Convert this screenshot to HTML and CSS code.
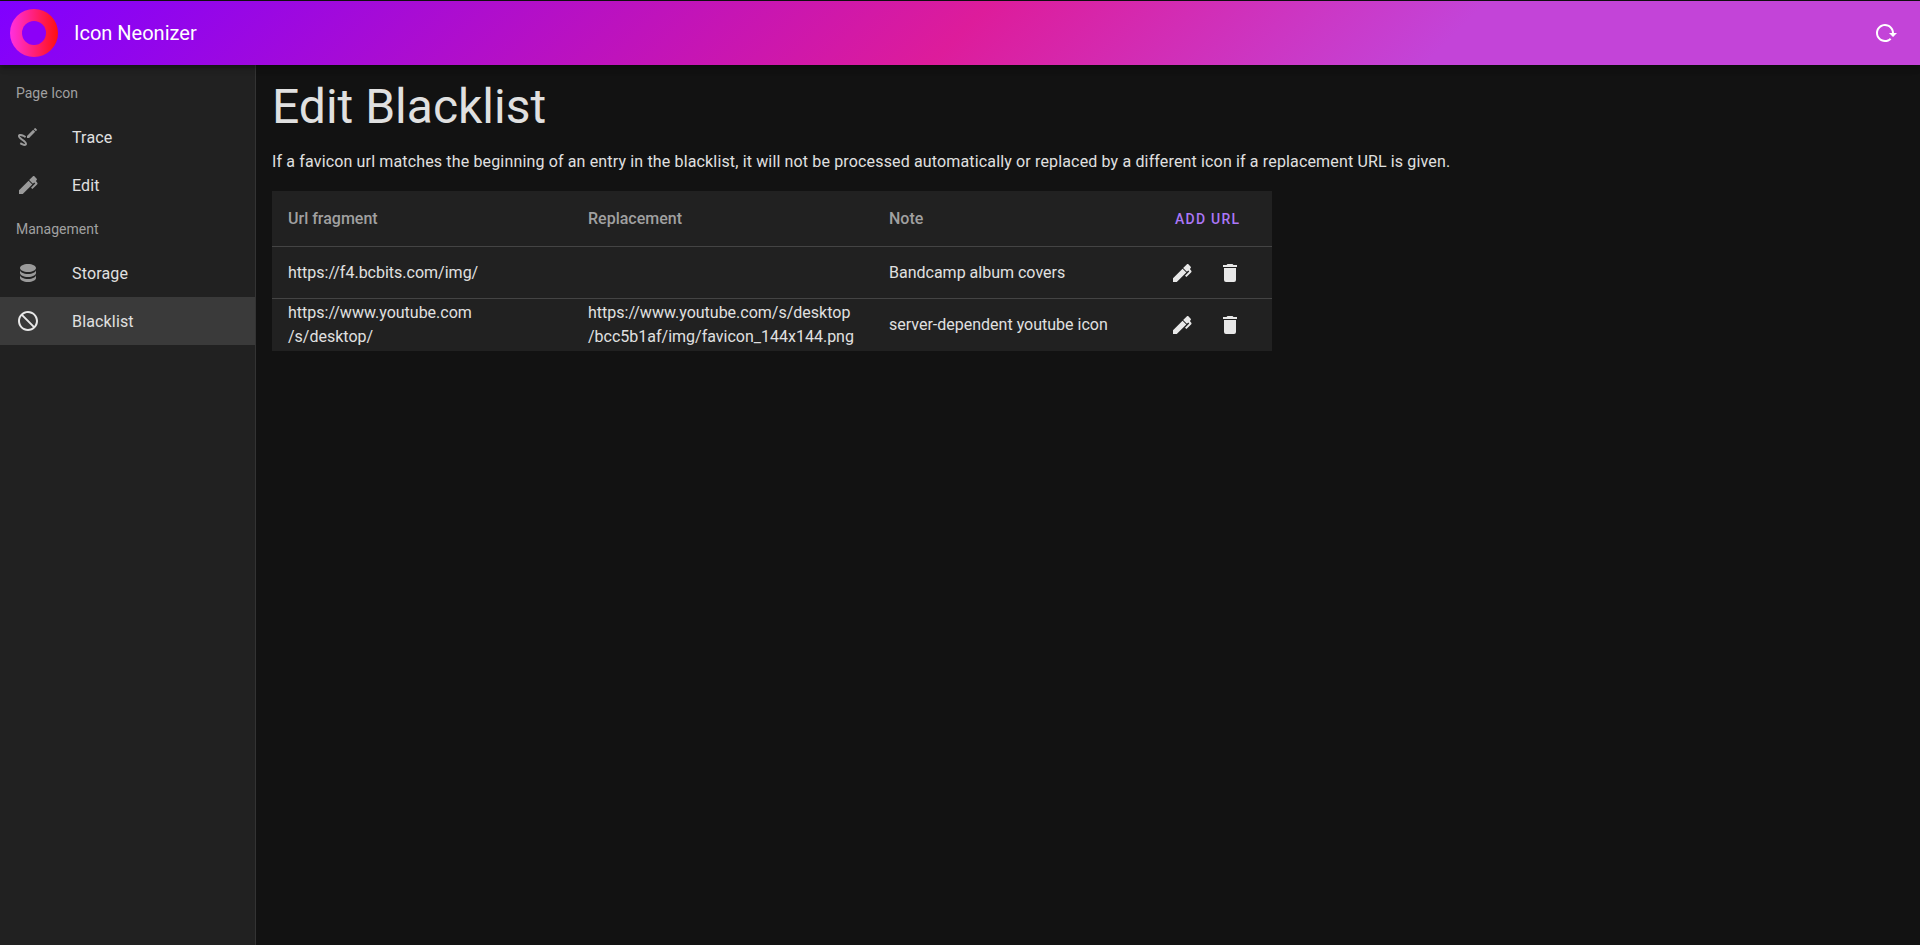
FILE: index.html
```html
<!DOCTYPE html>
<html lang="en">
<head>
<meta charset="utf-8" />
<title>Icon Neonizer</title>
<link rel="stylesheet" href="styles.css">
</head>
<body>
    <header class="topbar">
        <div class="logo"><div class="logo-hole"></div></div>
        <div class="app-title">Icon Neonizer</div>
        <button class="icon-btn reload" type="button">
            <svg viewBox="0 0 24 24"><path d="M2 12C2 16.97 6.03 21 11 21C13.39 21 15.68 20.06 17.4 18.4L15.9 16.9C14.63 18.25 12.86 19 11 19C4.76 19 1.64 11.46 6.05 7.05C10.46 2.64 18 5.77 18 12H15L19 16H19.1L23 12H20C20 7.03 15.97 3 11 3C6.03 3 2 7.03 2 12Z"/></svg>
        </button>
    </header>
    <div class="layout">
        <nav class="sidebar">
            <div class="nav-head">Page Icon</div>
            <a class="nav-item">
                <svg viewBox="0 0 24 24"><path d="M9.75 20.85C11.53 20.15 11.14 18.22 10.24 17C9.35 15.75 8.12 14.89 6.88 14.06C6 13.5 5.19 12.8 4.54 12C4.26 11.67 3.69 11.06 4.27 10.94C4.86 10.82 5.88 11.4 6.4 11.62C7.31 12 8.21 12.44 9.05 12.96L10.06 11.26C8.5 10.23 6.5 9.32 4.64 9.05C3.58 8.89 2.46 9.11 2.1 10.26C1.78 11.25 2.29 12.25 2.87 13.03C4.24 14.86 6.37 15.74 7.96 17.32C8.3 17.65 8.71 18.04 8.91 18.5C9.12 18.94 9.07 18.97 8.6 18.97C7.36 18.97 5.81 18 4.8 17.36L3.79 19.06C5.32 20 7.88 21.47 9.75 20.85M20.84 5.25C21.06 5.03 21.06 4.67 20.84 4.46L19.54 3.16C19.33 2.95 18.97 2.95 18.76 3.16L17.74 4.18L19.82 6.26M11 10.92V13H13.08L19.23 6.85L17.15 4.77L11 10.92Z"/></svg>
                <span>Trace</span>
            </a>
            <a class="nav-item">
                <svg viewBox="0 0 24 24"><path d="M20.71,7.04C20.37,7.38 20.04,7.71 20.03,8.04C20,8.36 20.34,8.69 20.66,9C21.14,9.5 21.61,9.95 21.59,10.44C21.57,10.93 21.06,11.44 20.55,11.94L16.42,16.08L15,14.66L19.25,10.42L18.29,9.46L16.87,10.87L13.12,7.12L16.96,3.29C17.35,2.9 18,2.9 18.37,3.29L20.71,5.63C21.1,6 21.1,6.65 20.71,7.04M3,17.25L12.56,7.68L16.31,11.43L6.75,21H3V17.25Z"/></svg>
                <span>Edit</span>
            </a>
            <div class="nav-head">Management</div>
            <a class="nav-item">
                <svg viewBox="0 0 24 24"><path d="M12,3C7.58,3 4,4.79 4,7C4,9.21 7.58,11 12,11C16.42,11 20,9.21 20,7C20,4.79 16.42,3 12,3M4,9V12C4,14.21 7.58,16 12,16C16.42,16 20,14.21 20,12V9C20,11.21 16.42,13 12,13C7.58,13 4,11.21 4,9M4,14V17C4,19.21 7.58,21 12,21C16.42,21 20,19.21 20,17V14C20,16.21 16.42,18 12,18C7.58,18 4,16.21 4,14Z"/></svg>
                <span>Storage</span>
            </a>
            <a class="nav-item active">
                <svg viewBox="0 0 24 24"><path d="M12 2C17.5 2 22 6.5 22 12S17.5 22 12 22 2 17.5 2 12 6.5 2 12 2M12 4C10.1 4 8.4 4.6 7.1 5.7L18.3 16.9C19.3 15.5 20 13.8 20 12C20 7.6 16.4 4 12 4M16.9 18.3L5.7 7.1C4.6 8.4 4 10.1 4 12C4 16.4 7.6 20 12 20C13.9 20 15.6 19.4 16.9 18.3Z"/></svg>
                <span>Blacklist</span>
            </a>
        </nav>
        <main class="content">
            <h1>Edit Blacklist</h1>
            <p class="intro">If a favicon url matches the beginning of an entry in the blacklist, it will not be processed automatically or replaced by a different icon if a replacement URL is given.</p>
            <table class="blacklist">
                <colgroup>
                    <col class="col-url" />
                    <col class="col-replacement" />
                    <col class="col-note" />
                    <col class="col-actions" />
                </colgroup>
                <thead>
                    <tr>
                        <th>Url fragment</th>
                        <th>Replacement</th>
                        <th>Note</th>
                        <th><span class="add-url">Add URL</span></th>
                    </tr>
                </thead>
                <tbody>
                    <tr>
                        <td>https://f4.bcbits.com/img/</td>
                        <td></td>
                        <td>Bandcamp album covers</td>
                        <td>
                            <div class="actions">
                                <button class="icon-btn" type="button"><svg viewBox="0 0 24 24"><path d="M20.71,7.04C20.37,7.38 20.04,7.71 20.03,8.04C20,8.36 20.34,8.69 20.66,9C21.14,9.5 21.61,9.95 21.59,10.44C21.57,10.93 21.06,11.44 20.55,11.94L16.42,16.08L15,14.66L19.25,10.42L18.29,9.46L16.87,10.87L13.12,7.12L16.96,3.29C17.35,2.9 18,2.9 18.37,3.29L20.71,5.63C21.1,6 21.1,6.65 20.71,7.04M3,17.25L12.56,7.68L16.31,11.43L6.75,21H3V17.25Z"/></svg></button>
                                <button class="icon-btn" type="button"><svg viewBox="0 0 24 24"><path d="M19,4H15.5L14.5,3H9.5L8.5,4H5V6H19V4M6,19A2,2 0 0,0 8,21H16A2,2 0 0,0 18,19V7H6V19Z"/></svg></button>
                            </div>
                        </td>
                    </tr>
                    <tr>
                        <td>https://www.youtube.com<br />/s/desktop/</td>
                        <td>https://www.youtube.com/s/desktop<br />/bcc5b1af/img/favicon_144x144.png</td>
                        <td>server-dependent youtube icon</td>
                        <td>
                            <div class="actions">
                                <button class="icon-btn" type="button"><svg viewBox="0 0 24 24"><path d="M20.71,7.04C20.37,7.38 20.04,7.71 20.03,8.04C20,8.36 20.34,8.69 20.66,9C21.14,9.5 21.61,9.95 21.59,10.44C21.57,10.93 21.06,11.44 20.55,11.94L16.42,16.08L15,14.66L19.25,10.42L18.29,9.46L16.87,10.87L13.12,7.12L16.96,3.29C17.35,2.9 18,2.9 18.37,3.29L20.71,5.63C21.1,6 21.1,6.65 20.71,7.04M3,17.25L12.56,7.68L16.31,11.43L6.75,21H3V17.25Z"/></svg></button>
                                <button class="icon-btn" type="button"><svg viewBox="0 0 24 24"><path d="M19,4H15.5L14.5,3H9.5L8.5,4H5V6H19V4M6,19A2,2 0 0,0 8,21H16A2,2 0 0,0 18,19V7H6V19Z"/></svg></button>
                            </div>
                        </td>
                    </tr>
                </tbody>
            </table>
        </main>
    </div>
</body>
</html>
```

FILE: styles.css
```css
html, body {
    height: 100%;
}
body {
    margin: 0;
    display: flex;
    flex-direction: column;
    overflow: hidden;
    font-family: Roboto, sans-serif;
    color: #e0e0e0;
    background-color: #121212;
}

/* top bar */
.topbar {
    position: relative;
    z-index: 2;
    flex: none;
    height: 64px;
    margin-top: 1px;
    display: flex;
    align-items: center;
    padding: 0 10px;
    background: linear-gradient(135deg, #8000ff 0%, #dd1c9b 50%, #c344d8 75%, #c344d8 100%);
    box-shadow: 0 2px 4px -1px rgba(0,0,0,.2), 0 4px 5px rgba(0,0,0,.14), 0 1px 10px rgba(0,0,0,.12);
}
.logo {
    width: 48px;
    height: 48px;
    border-radius: 50%;
    background: linear-gradient(to right, #ff30e0, #ff1010);
    display: flex;
    align-items: center;
    justify-content: center;
}
.logo-hole {
    width: 24px;
    height: 24px;
    border-radius: 50%;
    background-color: #8c00f8;
}
.app-title {
    margin-left: 16px;
    font-size: 20px;
    font-weight: 400;
    line-height: 24px;
    color: #fff;
}
.reload {
    margin-left: auto;
    color: #fff;
}

/* sidebar */
.layout {
    flex: 1;
    display: flex;
    min-height: 0;
}
.sidebar {
    flex: none;
    width: 255px;
    padding-top: 8px;
    background-color: #212121;
    border-right: 1px solid #333;
}
.nav-head {
    height: 40px;
    padding-left: 16px;
    display: flex;
    align-items: center;
    font-size: 14px;
    color: #a0a0a0;
}
.nav-item {
    height: 48px;
    padding-left: 16px;
    display: flex;
    align-items: center;
    font-size: 16px;
    letter-spacing: .01em;
    color: #e0e0e0;
}
.nav-item svg {
    width: 24px;
    height: 24px;
    margin-right: 32px;
    fill: #9a9a9a;
}
.nav-item.active {
    background-color: #3a3a3a;
}
.nav-item.active svg {
    fill: #e8e8e8;
}

/* main */
.content {
    flex: 1;
    padding: 17px 16px 16px;
}
h1 {
    margin: 0;
    font-size: 48px;
    font-weight: 400;
    line-height: 50px;
}
.intro {
    margin: 18px 0 0;
    font-size: 16px;
    line-height: 24px;
    letter-spacing: .009375em;
}

.blacklist {
    width: 1000px;
    margin-top: 17px;
    table-layout: fixed;
    border-collapse: collapse;
    background-color: #212121;
    font-size: 16px;
    line-height: 24px;
}
.col-url { width: 300px; }
.col-replacement { width: 301px; }
.col-note { width: 269px; }
.col-actions { width: 130px; }
.blacklist th {
    height: 55px;
    padding: 0 16px;
    text-align: left;
    font-weight: 500;
    color: #a0a0a0;
    border-bottom: 1px solid #444;
}
.blacklist td {
    height: 51px;
    padding: 0 16px;
    border-bottom: 1px solid #444;
}
.blacklist tr:last-child td {
    height: 52px;
    border-bottom: 0;
}
.add-url {
    margin-left: 17px;
    font-size: 14px;
    font-weight: 500;
    letter-spacing: .0892857em;
    text-transform: uppercase;
    color: #ab77f7;
}
.actions {
    display: flex;
}
.icon-btn {
    width: 48px;
    height: 48px;
    padding: 0;
    border: 0;
    background: none;
    display: flex;
    align-items: center;
    justify-content: center;
}
.icon-btn svg {
    width: 24px;
    height: 24px;
    fill: #e8e8e8;
}
.reload svg {
    fill: #fff;
}
```
